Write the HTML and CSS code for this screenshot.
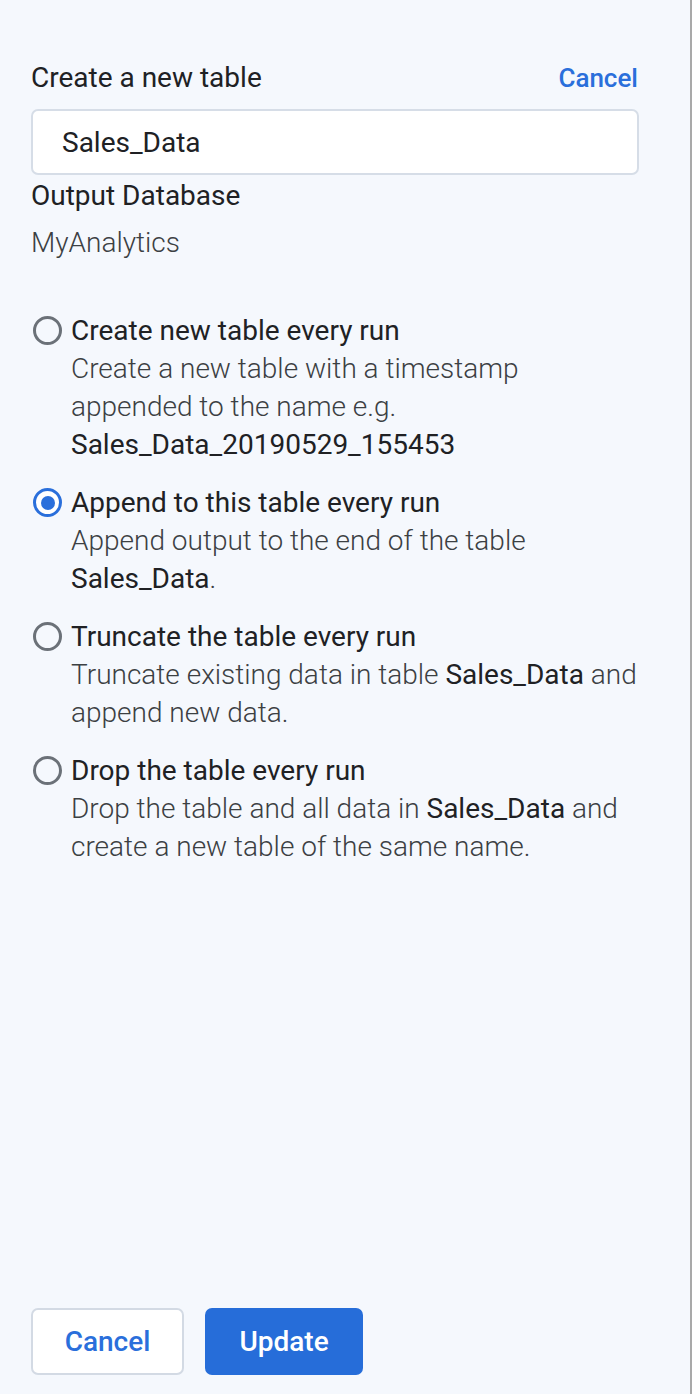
FILE: index.html
```html
<!DOCTYPE html>
<html lang="en">
<head>
<meta charset="utf-8">
<link rel="stylesheet" href="styles.css">
<title>Create a new table</title>
</head>
<body>
<div class="panel">
  <div class="header">
    <span class="header-title">Create a new table</span>
    <a class="link-cancel">Cancel</a>
  </div>
  <div class="input">Sales_Data</div>
  <div class="label">Output Database</div>
  <div class="db-value">MyAnalytics</div>

  <div class="options">
    <div class="option">
      <span class="radio"></span>
      <div class="option-body">
        <div class="option-title">Create new table every run</div>
        <div class="option-desc">Create a new table with a timestamp appended to the name e.g. <b>Sales_Data_20190529_155453</b></div>
      </div>
    </div>
    <div class="option">
      <span class="radio radio-checked"></span>
      <div class="option-body">
        <div class="option-title">Append to this table every run</div>
        <div class="option-desc">Append output to the end of the table <b>Sales_Data</b>.</div>
      </div>
    </div>
    <div class="option">
      <span class="radio"></span>
      <div class="option-body">
        <div class="option-title">Truncate the table every run</div>
        <div class="option-desc">Truncate existing data in table <b>Sales_Data</b> and append new data.</div>
      </div>
    </div>
    <div class="option">
      <span class="radio"></span>
      <div class="option-body">
        <div class="option-title">Drop the table every run</div>
        <div class="option-desc">Drop the table and all data in <b>Sales_Data</b> and create a new table of the same name.</div>
      </div>
    </div>
  </div>

  <div class="footer">
    <button class="btn btn-secondary">Cancel</button>
    <button class="btn btn-primary">Update</button>
  </div>
</div>
</body>
</html>
```

FILE: styles.css
```css
* { box-sizing: border-box; }
html, body { margin: 0; padding: 0; }
body {
  background: #f5f8fd;
  font-family: Roboto, "Noto Sans", "Liberation Sans", sans-serif;
  color: #202124;
}
.panel {
  width: 692px;
  height: 1394px;
  padding: 61px 51px 0 31px;
  border-right: 2px solid #a9a9a9;
  display: flex;
  flex-direction: column;
}
.header {
  display: flex;
  justify-content: space-between;
  align-items: center;
  height: 34px;
}
.header-title {
  font-size: 28px;
  line-height: 34px;
}
.link-cancel {
  font-size: 26px;
  font-weight: 500;
  color: #2a6fdb;
  margin-right: 1px;
}
.input {
  margin-top: 14px;
  height: 66px;
  background: #fff;
  border: 2px solid #d6dde7;
  border-radius: 7px;
  padding: 0 29px;
  display: flex;
  align-items: center;
  font-size: 28px;
  color: #202124;
}
.label {
  margin-top: 2px;
  font-size: 28px;
  line-height: 38px;
}
.db-value {
  margin-top: 9px;
  font-size: 28px;
  font-weight: 300;
  line-height: 38px;
  color: #3c4043;
}
.options {
  margin-top: 50px;
  display: flex;
  flex-direction: column;
  gap: 20px;
}
.option {
  display: flex;
  gap: 9px;
  align-items: flex-start;
}
.radio {
  flex: none;
  width: 29px;
  height: 29px;
  margin: 4px 0 0 2px;
  border: 3px solid #6b7178;
  border-radius: 50%;
  background: transparent;
  position: relative;
}
.radio-checked {
  border-color: #2a6fdb;
  background: #fff;
}
.radio-checked::after {
  content: "";
  position: absolute;
  left: 4.5px;
  top: 4.5px;
  width: 14px;
  height: 14px;
  border-radius: 50%;
  background: #2a6fdb;
}
.option-body {
  flex: 1;
  min-width: 0;
}
.option-title {
  font-size: 28px;
  line-height: 38px;
  color: #202124;
}
.option-desc {
  font-size: 28px;
  line-height: 38px;
  font-weight: 300;
  color: #3c4043;
}
.option-desc b {
  font-weight: 400;
  color: #202124;
}
.footer {
  margin-top: auto;
  margin-bottom: 19px;
  display: flex;
  gap: 21px;
}
.btn {
  height: 67px;
  border-radius: 7px;
  font-family: inherit;
  font-size: 28px;
  font-weight: 500;
  cursor: pointer;
}
.btn-secondary {
  width: 153px;
  background: #fff;
  border: 2px solid #d3dae4;
  color: #2a6fdb;
}
.btn-primary {
  width: 158px;
  background: #266dd9;
  border: none;
  color: #fff;
}
```
